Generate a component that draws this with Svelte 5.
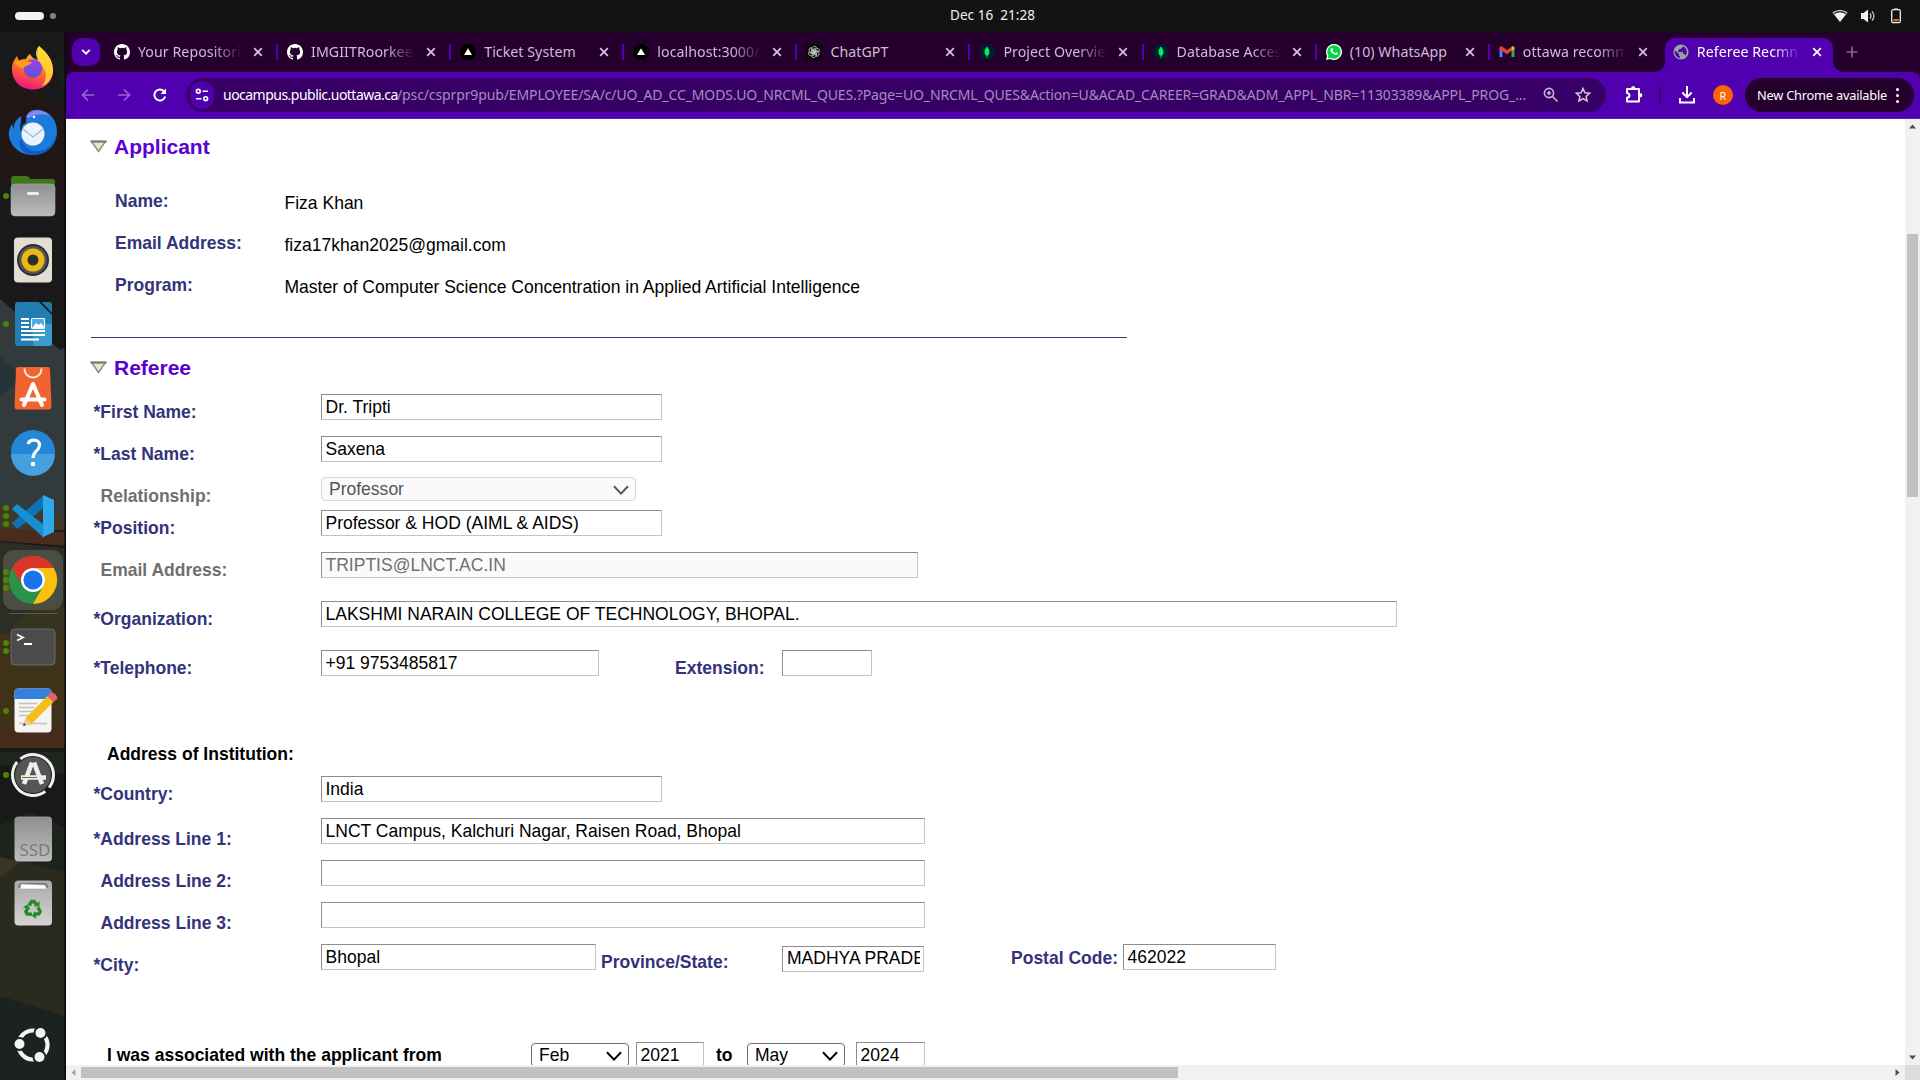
<script>
  const tabs = [
    { icon: 'github', title: 'Your Repositories', fade: true },
    { icon: 'github', title: 'IMGIITRoorkee/a', fade: true },
    { icon: 'vercel', title: 'Ticket System' },
    { icon: 'vercel', title: 'localhost:3000/t', fade: true },
    { icon: 'gpt', title: 'ChatGPT' },
    { icon: 'mongo', title: 'Project Overview', fade: true },
    { icon: 'mongo', title: 'Database Access', fade: true },
    { icon: 'whatsapp', title: '(10) WhatsApp' },
    { icon: 'gmail', title: 'ottawa recomm', fade: true },
    { icon: 'globe', title: 'Referee Recmn', fade: true, active: true }
  ];
  const host = 'uocampus.public.uottawa.ca';
  const path =
    '/psc/csprpr9pub/EMPLOYEE/SA/c/UO_AD_CC_MODS.UO_NRCML_QUES.?Page=UO_NRCML_QUES&Action=U&ACAD_CAREER=GRAD&ADM_APPL_NBR=11303389&APPL_PROG_...';

  const applicant = [
    ['Name:', 'Fiza Khan'],
    ['Email Address:', 'fiza17khan2025@gmail.com'],
    ['Program:', 'Master of Computer Science Concentration in Applied Artificial Intelligence']
  ];
  // h: row height, w: field width
  const refereeRows = [
    { label: 'First Name:', req: true, value: 'Dr. Tripti', w: 341, h: 42 },
    { label: 'Last Name:', req: true, value: 'Saxena', w: 341, h: 41 },
    { label: 'Relationship:', value: 'Professor', w: 315, h: 33, select: true, off: true },
    { label: 'Position:', req: true, value: 'Professor & HOD (AIML & AIDS)', w: 341, h: 42 },
    { label: 'Email Address:', value: 'TRIPTIS@LNCT.AC.IN', w: 597, h: 49, off: true },
    { label: 'Organization:', req: true, value: 'LAKSHMI NARAIN COLLEGE OF TECHNOLOGY, BHOPAL.', w: 1076, h: 49 },
    { label: 'Telephone:', req: true, value: '+91 9753485817', w: 278, h: 92, ext: true }
  ];
  const addressRows = [
    { label: 'Country:', req: true, value: 'India', w: 341 },
    { label: 'Address Line 1:', req: true, value: 'LNCT Campus, Kalchuri Nagar, Raisen Road, Bhopal', w: 604, low: true },
    { label: 'Address Line 2:', value: '', w: 604, low: true },
    { label: 'Address Line 3:', value: '', w: 604, low: true },
    { label: 'City:', req: true, value: 'Bhopal', w: 275, low: true, city: true }
  ];
  const dock = [
    { id: 'firefox', dots: 0 }, { id: 'thunderbird', dots: 0 }, { id: 'files', dots: 1 },
    { id: 'music', dots: 0 }, { id: 'writer', dots: 1 }, { id: 'store', dots: 0 },
    { id: 'help', dots: 0 }, { id: 'code', dots: 3 }, { id: 'chrome', dots: 3 },
    { id: 'terminal', dots: 2 }, { id: 'editor', dots: 1 }, { id: 'updater', dots: 1 },
    { id: 'ssd', dots: 0 }, { id: 'trash', dots: 0 }
  ];
</script>

{#snippet chevron()}
  <svg class="chev" width="16" height="10" viewBox="0 0 16 10"><path d="M1 1.2 8 8.6 15 1.2" fill="none" stroke="currentColor" stroke-width="2" /></svg>
{/snippet}

{#snippet favicon(id)}
  <svg class="fav" width="16" height="16" viewBox="0 0 16 16">
    {#if id === 'github'}
      <path fill="#fff" d="M8 0C3.58 0 0 3.58 0 8c0 3.54 2.29 6.53 5.47 7.59.4.07.55-.17.55-.38 0-.19-.01-.82-.01-1.49-2.01.37-2.53-.49-2.69-.94-.09-.23-.48-.94-.82-1.13-.28-.15-.68-.52-.01-.53.63-.01 1.08.58 1.23.82.72 1.21 1.87.87 2.33.66.07-.52.28-.87.51-1.07-1.78-.2-3.64-.89-3.64-3.95 0-.87.31-1.59.82-2.15-.08-.2-.36-1.02.08-2.12 0 0 .67-.21 2.2.82a7.6 7.6 0 0 1 4 0c1.53-1.04 2.2-.82 2.2-.82.44 1.1.16 1.92.08 2.12.51.56.82 1.27.82 2.15 0 3.07-1.87 3.75-3.65 3.95.29.25.54.73.54 1.48 0 1.07-.01 1.93-.01 2.2 0 .21.15.46.55.38A8 8 0 0 0 16 8c0-4.42-3.58-8-8-8Z" />
    {:else if id === 'vercel'}
      <circle cx="8" cy="8" r="8" fill="#000" /><path d="M8 4.2 12 11H4Z" fill="#fff" />
    {:else if id === 'gpt'}
      <rect width="16" height="16" rx="2" fill="#0a0a0a" />
      <g fill="none" stroke="#d0d0d0" stroke-width=".8">
        {#each [0, 60, 120, 180, 240, 300] as a}
          <path transform={`rotate(${a} 8 8)`} d="M6.300 8.800V4.600C6.300 2.100 9.300 1.600 10.500 3.500L7.400 5.400V8.600" />
        {/each}
      </g>
    {:else if id === 'mongo'}
      <circle cx="8" cy="8" r="8" fill="#001e2b" /><path d="M8 2.500c3.600 4 2.800 8 .4 9.500v2h-.8v-2C5.200 10.500 4.400 6.500 8 2.500Z" fill="#00ed64" />
    {:else if id === 'whatsapp'}
      <path d="M0 16 1.100 12A8 8 0 1 1 4 14.900Z" fill="#fff" /><path d="M1.600 14.500 2.400 11.700A6.700 6.700 0 1 1 4.500 13.700Z" fill="#00d740" />
      <path d="M5.300 4.200c.9-.8 1.300.1 1.700 1.300.1.500-.8.900-.5 1.300.7 1.300 1.600 1.900 2.700 2.400.6 0 .8-1 1.200-1l1.500.8c.3 1.500-1.500 2.100-2.300 1.900C7 10.300 4.900 8 4.400 6.200c0-.8.400-1.500.9-2Z" fill="#fff" />
    {:else if id === 'gmail'}
      <path d="M.500 4v9h3V6.500Z" fill="#4285f4" /><path d="M15.500 4v9h-3V6.500Z" fill="#34a853" />
      <path d="M.500 4c0-1.800 1.800-2.200 3-1.200L8 6.200l4.500-3.400v4L8 10.200.500 5Z" fill="#ea4335" /><path d="M12.500 2.800c1.200-1 3-.6 3 1.200v1l-3 2Z" fill="#fbbc04" />
    {:else}
      <circle cx="8" cy="8" r="7.600" fill="#9aa0a6" />
      <path d="M1.800 6.500 6 10v1.500l1 1V14C3.500 13.500 1.300 10.500 1.800 6.500ZM9.500 2v1.500L7.500 5H6v1.500H5V8h5v2h1.500l1 1.500C14.500 9 14.500 4 9.500 2Z" fill="#4b0aa0" />
    {/if}
  </svg>
{/snippet}

{#snippet dockIcon(id)}
  <svg width="66" height="64" viewBox="0 0 66 64">
    {#if id === 'firefox'}
      <path d="M33 53.500C20 53.500 12 44 12 33c0-6 2-9 5-13l2 5c2-2 5-2 7-2 1-2 2-4 4-5 2 4 5 5 8 6-1-5-1-8 1-14 5 5 13 11 14 23 1 12-8 20.500-20 20.500Z" fill="url(#ff)" />
      <path d="M39 10c6 5 14 12 14 24 0 7-5 14-11 16 5-6 5-13 1-19-4-6-11-13-4-21Z" fill="#ffd83b" opacity=".85" />
      <circle cx="33" cy="32.500" r="9.300" fill="url(#fp)" /><path d="M14 26c4-3 10-1 18 0-2 4-7 3-8 6-3 1-7-2-10-6Z" fill="#ff9a1f" />
    {:else if id === 'thunderbird'}
      <path d="M12 24c-4 6-4 13-1 18 4 9 13 13 22 13 14 0 24-10 24-24 0-13-11-23-23-21-7 1-8 7-8 13-4 1-5 5-4 9C18 29 22 22 21 16c-5 4-8 8-7 14l-2-6Z" fill="#1b7cdb" />
      <path d="M56 23c3 17-6 27-18 28-10 1-15-6-17-12-5 5 2 16 12 16C49 55 60 41 56 23Z" fill="#105cc4" />
      <path d="M26 17c3-8 17-9 24-1-8-3-15-2-21 2Z" fill="#8a86ee" /><circle cx="33" cy="34" r="11.500" fill="#edf3fc" /><path d="M23 29l10 8 10-8" fill="none" stroke="#a5b5dd" stroke-width="1.300" /><circle cx="34" cy="17" r="1.200" fill="#fff" />
    {:else if id === 'files'}
      <path d="M11 15q0-3 3-3h12q3 0 4 3h22q3 0 3 3v20H11Z" fill="#3f7818" /><rect x="11" y="20" width="44" height="32" rx="4" fill="url(#gr)" stroke="#aaa" stroke-width=".6" /><rect x="27" y="28" width="12" height="3" rx="1.500" fill="#eee" />
    {:else if id === 'music'}
      <rect x="14" y="9.500" width="38" height="45" rx="4" fill="#e3ddd2" /><circle cx="33" cy="32" r="16" fill="#2c3036" /><circle cx="33" cy="32" r="14" fill="#555" /><circle cx="33" cy="32" r="11.500" fill="#ecb913" /><circle cx="33" cy="32" r="5.500" fill="#2b2c2e" />
    {:else if id === 'writer'}
      <path d="M15 13q0-3 3-3h21l13 13v28q0 3-3 3H18q-3 0-3-3Z" fill="#217eb2" /><path d="M33 32h19v19q0 3-3 3H33Z" fill="#3a9bcd" /><path d="M41.500 10H49q3 0 3 3v8Z" fill="#2777a0" />
      <path d="M21 27h8M21 31h8M21 35h8M21 39h24M21 43h24M21 47.500h18" stroke="#fff" stroke-width="2" /><rect x="31.500" y="26.500" width="13" height="10" rx="1" fill="#4caadc" stroke="#fff" stroke-width="1.200" /><path d="m32 36 4-5 3 2 2-2 4 5Z" fill="#fff" />
    {:else if id === 'store'}
      <path d="M18 11h30q2 0 2 2l1.500 37q0 3.500-3 3.500h-31q-3 0-3-3.500L16 13q0-2 2-2Z" fill="#f26332" /><path d="M24.500 12.500c0 12 17 12 17 0" fill="none" stroke="#ffe9df" stroke-width="1.800" />
      <path d="M33 28 24 49M33 28l9 21M21.500 43.500h23" fill="none" stroke="#fff" stroke-width="4" stroke-linecap="round" />
    {:else if id === 'help'}
      <circle cx="33" cy="32" r="22" fill="#2586d8" /><path d="M11 34h44a22 22 0 0 1-44 0Z" fill="#45a0e2" /><path d="M28 24c2-5.500 12-5 11.500 1.500C39 31 33 31 33 38" fill="none" stroke="#fff" stroke-width="3.200" /><circle cx="33" cy="44" r="2.300" fill="#fff" />
    {:else if id === 'code'}
      <path d="M12 39 44 11v13L17 45Z" fill="#0e72b7" /><path d="M12 25l5-5 27 21v13Z" fill="#178fd4" /><path d="m43 11 11 5v32l-11 5Z" fill="#2fa8ec" />
    {:else if id === 'chrome'}
      <rect x="3" y="2" width="60" height="60" rx="11" fill="#4c4d42" />
      <circle cx="33" cy="32" r="24" fill="#2b9348" /><path d="M12.200 20A24 24 0 0 1 53.800 20H33a12 12 0 0 0-10.400 18Z" fill="#dc3428" /><path d="M53.800 20A24 24 0 0 1 33 56l10.400-18A12 12 0 0 0 33 20Z" fill="#fbc00c" /><circle cx="33" cy="32" r="12" fill="#fff" /><circle cx="33" cy="32" r="9.600" fill="#1a73e8" />
    {:else if id === 'terminal'}
      <rect x="11" y="14" width="44" height="36" rx="4" fill="#4b4b4b" stroke="#777" stroke-width=".8" /><path d="m17 19.500 6 3-6 3M24 29h8" fill="none" stroke="#fff" stroke-width="1.800" />
    {:else if id === 'editor'}
      <rect x="14.500" y="9.500" width="37" height="44" rx="4" fill="#f4f4f4" /><path d="M14.500 20v-6.500q0-4 4-4h29q4 0 4 4V20Z" fill="#3580df" /><path d="M19 24.500h18M19 28.500h15M19 32.500h15M19 36.500h11M19 44.500h28" stroke="#c6c1b4" stroke-width="1.600" /><path d="m23 47 2.500-8 22-22 6 6-22 22Z" fill="#f6bd1a" /><path d="m23 47 2.500-8 6 6Z" fill="#e6cfa4" /><path d="m47.500 17 3-3q2-1.500 5 1.500 3 3 1 5l-3 2.500Z" fill="#e56167" /><path d="m23 47 1-3 2 2Z" fill="#333" />
    {:else if id === 'updater'}
      <circle cx="33" cy="32" r="18" fill="#555" /><circle cx="33" cy="32" r="20.500" fill="none" stroke="#f0f0f0" stroke-width="3" stroke-dasharray="59 5.400" transform="rotate(-128 33 32)" /><path d="M32 19.500 24 41M34 19.500l8 21.500M21 34.500h25" fill="none" stroke="#ededed" stroke-width="4.600" /><path d="M22 34.500h15" stroke="#3f8c1e" stroke-width="1" />
    {:else if id === 'ssd'}
      <rect x="14.500" y="9.500" width="37.500" height="45" rx="4" fill="url(#gr)" /><text x="35" y="49" class="ssd">SSD</text>
    {:else}
      <rect x="14.500" y="9.500" width="37.500" height="45" rx="4" fill="url(#gr2)" /><path d="M18 17q0-5 4-5h22q4 0 4 5Z" fill="#777" /><path d="m20 18 1-5 24 1 2 4Z" fill="#fff" stroke="#aaa" stroke-width=".6" />
      <g fill="none" stroke="#258b25" stroke-width="3.400">
        {#each [0, 120, 240] as a}
          <path transform={`rotate(${a} 33 38)`} d="m29 34.500 2.700-4h2.600l2.200 3.500" /><path transform={`rotate(${a} 33 38)`} d="M34 35.500h5.500V30Z" fill="#258b25" stroke="none" />
        {/each}
      </g>
    {/if}
  </svg>
{/snippet}

{#snippet rowLabel(r)}
  <div class="label" class:muted={r.off} class:low={r.low} class:sel={r.select} class:opt={!r.req}>{r.req ? '*' : ''}{r.label}</div>
{/snippet}

<div class="desktop">
  <header class="topbar">
    <div class="ws"><i></i><b></b></div>
    <div class="clock">Dec 16&nbsp; 21:28</div>
    <div class="status">
      <svg width="16" height="16" viewBox="0 0 16 16"><path d="M.500 4.500C5 1 11 1 15.500 4.500L8 14Z" fill="#f2f2f2" /><path d="M2 5.500c4-2.600 8-2.600 12 0" fill="none" stroke="#131313" stroke-width="1.300" /></svg>
      <svg width="16" height="16" viewBox="0 0 16 16"><path d="M1 5h2.500L8 1.500v13L3.500 11H1Z" fill="#f2f2f2" /><path d="M9.800 5.500c1.500 1.500 1.500 3.500 0 5M12 3.500c2.600 2.500 2.600 6.500 0 9" fill="none" stroke="#ccc" stroke-width="1.200" /></svg>
      <svg width="12" height="16" viewBox="0 0 12 16"><path d="M4 .500h4V2H4Z" fill="#f2f2f2" /><rect x="1.700" y="1.700" width="8.600" height="13" rx="1.500" fill="none" stroke="#f2f2f2" stroke-width="1.300" /><path d="M3.300 11h5.400v2.300H3.300Z" fill="#f0662e" /></svg>
    </div>
  </header>

  <div class="below">
    <nav class="dock">
      <svg class="wall" width="66" height="1048" viewBox="0 32 66 1048">
        <defs>
          <linearGradient id="ff" x1=".7" y1="0" x2=".4" y2="1"><stop offset="0" stop-color="#ffe226" /><stop offset=".5" stop-color="#ff7a1a" /><stop offset="1" stop-color="#f0138a" /></linearGradient>
          <linearGradient id="fp" x1="0" y1="0" x2="0" y2="1"><stop offset="0" stop-color="#a23df0" /><stop offset="1" stop-color="#5a55d6" /></linearGradient>
          <linearGradient id="gr" x1="0" y1="0" x2="0" y2="1"><stop offset="0" stop-color="#8f8f8f" /><stop offset="1" stop-color="#bdbdbd" /></linearGradient>
          <linearGradient id="gr2" x1="0" y1="0" x2="0" y2="1"><stop offset="0" stop-color="#aaa" /><stop offset="1" stop-color="#d4d4d4" /></linearGradient>
        </defs>
        <rect y="32" width="66" height="1048" fill="#19191a" />
        <path d="M0 68 66 110V212L40 196 0 180Z" fill="#211716" /><path d="M52 60 66 55V94Z" fill="#18201a" />
        <path d="M0 299 60 350 66 347V518H0Z" fill="#323a3c" /><path d="M0 355 22 380 0 395Z" fill="#263439" />
        <path d="M0 507 66 516V530H0Z" fill="#40382a" /><path d="M0 528 66 532V546L0 541Z" fill="#4a2c1f" />
        <path d="M0 542 66 548V640H0Z" fill="#2a2e25" /><path d="M12 628Q30 600 66 608V640H12Z" fill="#35341f" /><rect y="634" width="66" height="95" fill="#3e3319" />
        <rect y="727" width="66" height="21" fill="#462b1c" /><rect y="748" width="66" height="110" fill="#191a18" /><path d="M0 752H66V775L0 765Z" fill="#1f261f" /><path d="M0 825 30 812 66 828V872L0 858Z" fill="#1d241e" />
        <path d="M0 857 66 872V1017L0 996Z" fill="#2b2a1e" /><path d="M0 857 20 862 0 877Z" fill="#3a3524" /><path d="M0 996 66 1017V1080H0Z" fill="#1c231e" />
        <rect x="64.500" y="32" width="1.500" height="1048" fill="#090909" />
      </svg>
      {#each dock as d}
        <div class="app" class:split={d.id === 'chrome'}>
          {@render dockIcon(d.id)}
          <span class="dots">{#each Array(d.dots) as _}<i></i>{/each}</span>
        </div>
      {/each}
      <svg class="apps" width="40" height="40" viewBox="0 0 40 40"><circle cx="20" cy="20" r="14.500" fill="none" stroke="#f4f4f4" stroke-width="4.200" /><g fill="#f4f4f4" stroke="#1c231e" stroke-width="2"><circle cx="6.500" cy="19" r="6" /><circle cx="27.500" cy="8" r="6" /><circle cx="26.500" cy="32" r="6" /></g></svg>
    </nav>

    <main class="browser">
      <div class="tabs">
        <div class="search"><svg width="10" height="6" viewBox="0 0 10 6"><path d="m1.200.800 3.800 3.800L8.800.800" fill="none" stroke="#fff" stroke-width="1.900" /></svg></div>
        {#each tabs as t}
          <div class="tab" class:active={t.active}>
            {@render favicon(t.icon)}
            <span class="title" class:fade={t.fade}>{t.title}</span>
            <svg class="x" width="10" height="10" viewBox="0 0 10 10"><path d="m1.200 1.200 7.600 7.600m0-7.600L1.200 8.800" stroke="currentColor" stroke-width="1.700" /></svg>
          </div>
        {/each}
        <svg class="plus" width="12" height="12" viewBox="0 0 12 12"><path d="M6 .500v11M.500 6h11" stroke="#80668a" stroke-width="1.700" /></svg>
      </div>
      <div class="toolbar">
        <svg class="nav dim" width="16" height="16" viewBox="0 0 16 16"><path d="M14 8H3M8 2.500 2.500 8 8 13.500" fill="none" stroke="currentColor" stroke-width="1.700" /></svg>
        <svg class="nav dim" width="16" height="16" viewBox="0 0 16 16"><path d="M2 8h11M8 2.500 13.500 8 8 13.500" fill="none" stroke="currentColor" stroke-width="1.700" /></svg>
        <svg class="nav" width="16" height="16" viewBox="0 0 16 16"><path d="M13.200 9.500A5.500 5.500 0 1 1 12 4.300L13.500 6" fill="none" stroke="#fff" stroke-width="1.900" /><path d="M14 1.500V7H8.500Z" fill="#fff" /></svg>
        <div class="omni">
          <div class="site"><svg width="14" height="14" viewBox="0 0 14 14"><g fill="none" stroke="#fff" stroke-width="1.600"><circle cx="3.300" cy="3.300" r="1.900" /><path d="M7.500 3.300H13M1 10.700h5.500" /><circle cx="10.700" cy="10.700" r="1.900" /></g></svg></div>
          <span class="host">{host}</span><span class="path">{path}</span>
          <svg class="mag" width="16" height="16" viewBox="0 0 16 16"><circle cx="6" cy="6" r="4.600" fill="none" stroke="#c4b5d3" stroke-width="1.600" /><path d="m9.500 9.500 5 5M6 4v4M4 6h4" stroke="#c4b5d3" stroke-width="1.700" /></svg>
          <svg class="star" width="16" height="16" viewBox="0 0 16 16"><path d="m8 1.500 1.900 4.300 4.700.4-3.500 3.200 1 4.600L8 11.600 3.900 14l1-4.600L1.400 6.200l4.700-.4Z" fill="none" stroke="#d3c6df" stroke-width="1.500" /></svg>
        </div>
        <svg class="puzzle" width="18" height="20" viewBox="0 0 18 20"><path d="M2 4h12v4.500V16.500H2v-3.800q2.500-.400 2.500-2.300T2 8Z" fill="none" stroke="#fff" stroke-width="2" stroke-linejoin="round" /><path d="M6 3.500q0-2.500 2.200-2.500t2.200 2.500ZM14.500 8q2.800 0 2.800 2.200t-2.800 2.200Z" fill="#fff" /></svg>
        <i class="sep"></i>
        <svg class="dl" width="16" height="18" viewBox="0 0 16 18"><path d="M8 0v10M3.300 6.500 8 11.200l4.700-4.700M1 12v4.600h14V12" fill="none" stroke="#fff" stroke-width="2" /></svg>
        <div class="avatar">R</div>
        <div class="update"><span>New Chrome available</span><b></b></div>
      </div>

      <div class="view">
        <div class="page">
          <h2 class="h-app"><svg width="17" height="13" viewBox="0 0 17 13"><path d="M1.500 1.500h14L8.500 11.500Z" fill="#e4e4d2" stroke="#8a8a7a" stroke-width="1.400" /><path d="M.500 1.500h16" stroke="#77776a" stroke-width="2" /></svg>Applicant</h2>
          <div class="facts">
            {#each applicant as [k, v]}
              <div class="fact"><b>{k}</b><span>{v}</span></div>
            {/each}
          </div>
          <div class="rule"></div>
          <h2 class="h-ref"><svg width="17" height="13" viewBox="0 0 17 13"><path d="M1.500 1.500h14L8.500 11.500Z" fill="#e4e4d2" stroke="#8a8a7a" stroke-width="1.400" /><path d="M.500 1.500h16" stroke="#77776a" stroke-width="2" /></svg>Referee</h2>

          <section class="form">
            {#each refereeRows as r}
              <div class="row" style:height="{r.h}px">
                {@render rowLabel(r)}
                {#if r.select}
                  <div class="select off" style:width="{r.w}px">{r.value}{@render chevron()}</div>
                {:else}
                  <div class="input" class:off={r.off} style:width="{r.w}px">{r.value}</div>
                {/if}
                {#if r.ext}
                  <div class="label ext">Extension:</div><div class="input ext-in"></div>
                {/if}
              </div>
            {/each}
            <h3>Address of Institution:</h3>
            {#each addressRows as r}
              <div class="row addr">
                {@render rowLabel(r)}
                <div class="input" style:width="{r.w}px">{r.value}</div>
                {#if r.city}
                  <div class="label prov">Province/State:</div><div class="input prov-in"><span>MADHYA PRADE</span></div>
                  <div class="label post">Postal Code:</div><div class="input post-in">462022</div>
                {/if}
              </div>
            {/each}
            <div class="assoc">
              <b class="q">I was associated with the applicant from</b>
              <div class="select dark">Feb{@render chevron()}</div>
              <div class="input y1">2021</div>
              <b class="to">to</b>
              <div class="select dark">May{@render chevron()}</div>
              <div class="input y2">2024</div>
            </div>
          </section>
        </div>
        <div class="vbar">
          <svg width="15" height="15" viewBox="0 0 15 15"><path d="m4 9.500 3.500-4 3.500 4Z" fill="#505050" /></svg><i></i><svg width="15" height="15" viewBox="0 0 15 15"><path d="m4 5.500 3.500 4 3.500-4Z" fill="#505050" /></svg>
        </div>
        <div class="hbar">
          <svg width="15" height="15" viewBox="0 0 15 15"><path d="m9.500 4-4 3.500 4 3.500Z" fill="#a3a3a3" /></svg><i></i><svg width="15" height="15" viewBox="0 0 15 15"><path d="m5.500 4 4 3.500-4 3.500Z" fill="#505050" /></svg>
        </div>
        <div class="corner"></div>
      </div>
    </main>
  </div>
</div>

<style>
  :global(body) { margin: 0; overflow: hidden; }
  .desktop { width: 1920px; height: 1080px; display: flex; flex-direction: column; overflow: hidden; font-family: 'Noto Sans', 'Open Sans', sans-serif; background: #131313; }
  .desktop :global(*) { box-sizing: border-box; }
  svg { flex: none; display: block; }
  .topbar { height: 32px; flex: none; display: grid; grid-template-columns: 950px 86px 1fr; align-items: center; background: #131313; color: #f2f2f2; }
  .ws { display: flex; align-items: center; gap: 6px; padding-left: 15px; }
  .ws i { width: 29px; height: 8px; border-radius: 4px; background: #f2f2f2; }
  .ws b { width: 6px; height: 6px; border-radius: 3px; background: #828282; }
  .clock { font-size: 13.5px; letter-spacing: 0.050px; line-height: 20px; margin-top: -2px; white-space: nowrap; }
  .status { display: flex; justify-content: flex-end; gap: 12px; padding-right: 18px; }
  .status svg:last-child { margin-left: 2px; }
  .below { flex: 1; display: flex; min-height: 0; }

  .dock { width: 66px; flex: none; position: relative; display: flex; flex-direction: column; padding-top: 4px; }
  .wall { position: absolute; left: 0; top: 0; }
  .app { position: relative; height: 64px; flex: none; }
  .split { height: 67px; }
  .split::after { content: ''; position: absolute; left: 9px; top: 65px; width: 48px; height: 1px; background: #5b5a4a; }
  .dots { position: absolute; left: 3px; top: 0; height: 64px; display: flex; flex-direction: column; justify-content: center; gap: 2.500px; }
  .dots i { width: 5.500px; height: 5.500px; border-radius: 3px; background: #4c8500; }
  .apps { position: relative; margin: 90px 0 0 13px; }
  .ssd { font: 17px 'Noto Sans', sans-serif; fill: #7b7b7b; text-anchor: middle; }

  .browser { flex: 1; min-width: 0; display: flex; flex-direction: column; background: #26002d; }
  .tabs { height: 40px; flex: none; display: flex; align-items: center; color: #cdbcd4; font-size: 14.200px; }
  .search { width: 28px; height: 28px; margin: 0 4px 0 6px; border-radius: 10px; background: #5000af; display: grid; place-items: center; }
  .tab { position: relative; width: 173.1px; height: 40px; flex: none; display: flex; align-items: center; padding-left: 10px; }
  .tab::after { content: ''; position: absolute; right: -1px; top: 12px; width: 2px; height: 16px; background: #5000af; }
  .tab:nth-last-child(3)::after { display: none; }
  .title { margin-left: 8px; width: 104px; overflow: hidden; white-space: nowrap; line-height: 20px; letter-spacing: 0.050px; }
  .fade { -webkit-mask-image: linear-gradient(90deg, #000 72%, transparent 100%); mask-image: linear-gradient(90deg, #000 72%, transparent 100%); }
  .x { margin-left: 11px; color: #d5c6dc; }
  .active { width: 168px; height: 34px; align-self: flex-end; margin-left: 3px; background: #5000af; border-radius: 10px 10px 0 0; color: #fff; padding-left: 8px; padding-bottom: 6px; }
  .active::before, .active::after { content: ''; position: absolute; top: auto; bottom: 0; width: 10px; height: 10px; }
  .active::before { left: -10px; background: radial-gradient(circle at 0 0, transparent 9.500px, #5000af 10px); }
  .active::after { right: -10px; background: radial-gradient(circle at 100% 0, transparent 9.500px, #5000af 10px); }
  .active .x { color: #fff; }
  .plus { margin-left: 13px; }
  .toolbar { height: 47px; flex: none; display: flex; align-items: center; background: #5000af; border-radius: 8px 8px 0 0; border-bottom: 1px solid #6914bd; padding-left: 14px; }
  .nav { margin-right: 20px; color: #9566cd; }
  .nav + .nav + .nav { margin-right: 18px; }
  .omni { width: 1420px; height: 34px; flex: none; border-radius: 17px; background: #380066; display: flex; align-items: center; font-size: 14px; line-height: 20px; white-space: nowrap; }
  .site { width: 24px; height: 28px; border-radius: 13px; background: #5000af; display: grid; place-items: center; margin: 0 9px 0 4px; }
  .host { color: #fff; letter-spacing: -0.520px; width: 174px; }
  .path { color: #a48dbd; letter-spacing: -0.120px; width: 1129px; overflow: hidden; }
  .mag { margin-left: 17px; }
  .star { margin-left: 16px; }
  .puzzle { margin-left: 19px; }
  .sep { width: 2px; height: 16px; background: #35006f; margin-left: 16px; }
  .dl { margin-left: 18px; }
  .avatar { width: 20px; height: 20px; margin-left: 18px; border-radius: 50%; background: #fb6500; color: #fff; font-size: 11px; display: grid; place-items: center; }
  .update { width: 169px; height: 34px; margin-left: 12px; border-radius: 17px; background: #26002d; color: #fff; display: flex; align-items: center; padding-left: 12px; font-size: 12.800px; letter-spacing: -0.220px; white-space: nowrap; }
  .update span { width: 131px; }
  .update b { width: 3px; height: 3px; margin-left: 8px; border-radius: 50%; background: #fff; box-shadow: 0 -6px #fff, 0 6px #fff; }

  .view { flex: 1; min-height: 0; display: grid; grid-template: 946px 15px / 1839px 15px; background: #fff; }
  .page { overflow: hidden; font: 17.530px/20px 'Liberation Sans', Arial, sans-serif; color: #000; display: flex; flex-direction: column; }
  h2 { margin: 0; flex: none; display: flex; align-items: flex-start; font-size: 21px; line-height: 24px; color: #5a00d2; height: 24px; padding-left: 24px; gap: 7px; }
  h2 svg { margin-top: 5px; }
  .h-app { margin-top: 16px; }
  .facts { margin: 32px 0 0 49px; height: 146px; flex: none; }
  .fact { height: 42px; display: flex; }
  .fact b { width: 169.500px; color: #33337a; }
  .fact span { padding-top: 2px; }
  .rule { height: 1px; width: 1036px; flex: none; margin-left: 25px; background: #3e3974; }
  .h-ref { margin-top: 18px; }
  .form { margin: 14px 0 0 27px; flex: none; }
  .row { display: flex; align-items: flex-start; }
  .addr { height: 42px; }
  .label { width: 228px; flex: none; font-weight: bold; color: #33337a; padding-top: 8px; padding-left: 0.500px; white-space: nowrap; }
  .opt { padding-left: 7.500px; }
  .ext, .prov, .post { padding-left: 0; }
  .low { padding-top: 11px; }
  .sel { padding-top: 9px; }
  .muted { color: #6f6f6f; }
  .input { height: 26px; flex: none; border: 1px solid; border-color: #8c8c8c #c4c4c4 #c4c4c4 #8c8c8c; padding: 2px 3.500px; white-space: nowrap; overflow: hidden; background: #fff; }
  .input.off { background: #fafafa; color: #707070; }
  .select { position: relative; height: 24px; flex: none; border: 1px solid #d8d8d8; border-radius: 4px; padding: 1px 7px; }
  .select.off { background: #fafafa; color: #555; }
  .chev { position: absolute; right: 6px; top: 7px; }
  .ext { margin-left: 76px; width: 107px; }
  .ext-in { width: 90px; }
  h3 { margin: 0 0 0 14px; font-size: 17.530px; line-height: 20px; height: 34px; padding-top: 2px; }
  .prov { margin-left: 5px; width: 181px; }
  .prov-in { width: 142px; margin-top: 2px; padding: 1px 3px 0 4px; }
  .prov-in span { display: block; overflow: hidden; }
  .post { margin-left: 87px; width: 112px; padding-top: 4px; }
  .post-in { width: 153px; }
  .assoc { display: flex; align-items: flex-start; padding: 56px 0 0 14px; }
  .q { width: 424px; padding-top: 3px; }
  .dark { width: 98px; margin-top: 1px; border-color: #6e6e6e; }
  .y1 { width: 68px; margin-left: 7px; }
  .to { width: 43px; padding: 3px 0 0 12px; }
  .y2 { width: 69px; margin-left: 11px; }
  .vbar, .hbar { background: #f1f1f1; }
  .corner { background: #dcdcdc; }
  .vbar { display: flex; flex-direction: column; }
  .vbar i { flex: none; margin: 100px 2px auto; height: 263px; background: #c1c1c1; }
  .hbar { display: flex; }
  .hbar i { flex: none; margin: 2px auto 2px 0; width: 1097px; background: #c1c1c1; }
</style>
